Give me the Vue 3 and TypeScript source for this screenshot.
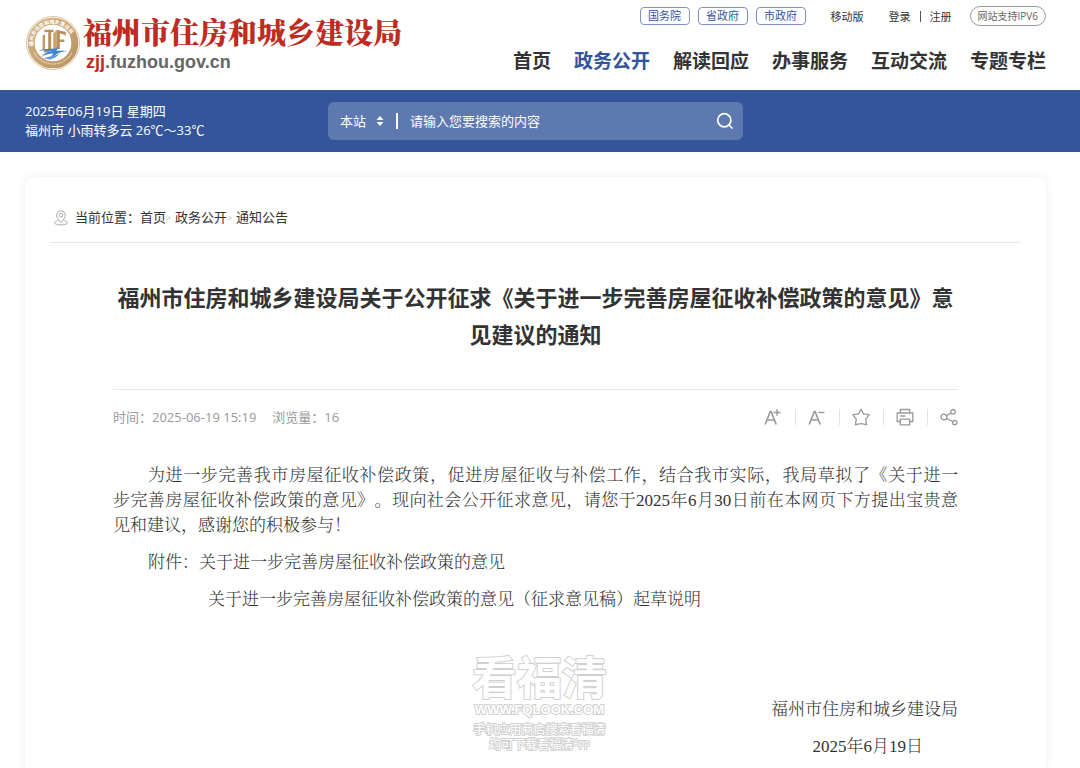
<script setup lang="ts">
import { ref } from 'vue'

const councils: string[] = ['国务院', '省政府', '市政府']
const nav: string[] = ['首页', '政务公开', '解读回应', '办事服务', '互动交流', '专题专栏']
const active = ref('政务公开')
const scope = ref('本站')
const keyword = ref('')
const fontSize = ref(17)
</script>

<template>
  <div class="page">
    <header class="header">
      <a class="brand" href="#">
        <svg class="emblem" viewBox="0 0 56 56" aria-hidden="true">
          <defs>
            <path id="ringTop" d="M8.500 33 A20 20 0 1 1 47.500 33" />
            <linearGradient id="gold" x1="0" y1="0" x2="1" y2="1">
              <stop offset="0" stop-color="#d6b486" />
              <stop offset="1" stop-color="#b8935f" />
            </linearGradient>
          </defs>
          <circle cx="28" cy="28" r="26.500" fill="#fff" stroke="#d9c3a2" stroke-width="1" />
          <circle cx="28" cy="28" r="21.800" fill="none" stroke="url(#gold)" stroke-width="7" />
          <text class="ring-text"><textPath href="#ringTop" startOffset="2">福州市住房和城乡建设局</textPath></text>
          <path d="M9 37.500A21.500 21.500 0 0 0 47 37.500" fill="none" stroke="#ead9bd" stroke-width="1.500" stroke-dasharray="1 .8" />
          <path d="M19.500 14.800h9v2.200h-2.300v17c0 2.600-2.400 3.600-7.200 3.600v-2.600c3 0 4.200-.4 4.200-1.600V17h-3.700z" fill="#b98f5a" />
          <path d="M17.600 20h2.400v14h-2.400z" fill="#c29a66" />
          <path d="M28.200 18.400l3.600-3.600v20.400h-3.600z" fill="#c9a471" />
          <path d="M31.800 14.800l9 2.200v4l-1.600-1.600-4.400-1v6h4.600v2.600h-4.600V34h-3z" fill="#b98f5a" />
          <path d="M14 35.500c6-2.400 11-1.200 16-2l4-2.400-2.600 4.600c5 0 8 0 12 .4-6 .4-8.400 1.400-12.400 3.400l-6.600 4.600 4-5.600c-5 .2-8.600 1.200-12 3.600 2.400-3.600 6-5 10.600-6-4.600-.6-9-.6-13-.6z" fill="#3f87d3" />
          <path d="M19 43.500c5-2.400 10-2.200 16-5-3.600 3.400-5.600 5-10 6z" fill="#5d9ade" />
        </svg>
        <span class="brand-text">
          <strong class="brand-name">福州市住房和城乡建设局</strong>
          <span class="brand-url"><b>zjj</b>.fuzhou.gov.cn</span>
        </span>
      </a>
      <div class="header-side">
        <div class="tools">
          <div class="councils">
            <a v-for="c in councils" :key="c" href="#" class="council">{{ c }}</a>
          </div>
          <a href="#" class="mobile">移动版</a>
          <div class="account"><a href="#">登录</a><i></i><a href="#">注册</a></div>
          <a href="#" class="ipv6">网站支持IPV6</a>
        </div>
        <nav class="nav">
          <a v-for="n in nav" :key="n" href="#" :class="{ active: n === active }" @click.prevent="active = n">{{ n }}</a>
        </nav>
      </div>
    </header>

    <div class="band">
      <div class="weather">
        <div>2025年06月19日 星期四</div>
        <div>福州市 小雨转多云 26℃～33℃</div>
      </div>
      <form class="search" @submit.prevent>
        <label class="scope">
          <select v-model="scope" aria-label="搜索范围">
            <option>本站</option>
          </select>
          <svg viewBox="0 0 8 10" aria-hidden="true"><path d="M4 0l3.500 4h-7zM4 10L.5 6h7z" fill="#fff" /></svg>
        </label>
        <input v-model="keyword" type="text" aria-label="搜索" placeholder="请输入您要搜索的内容" />
        <button type="submit" aria-label="搜索">
          <svg viewBox="0 0 18 18" fill="none" stroke="#fff" stroke-width="1.700" stroke-linecap="round"><circle cx="8.300" cy="8.300" r="6.600" /><path d="M13 13l3 3" /></svg>
        </button>
      </form>
    </div>

    <main class="card">
      <div class="crumbs">
        <svg viewBox="0 0 14 16" fill="none" stroke="#a5a5a5" stroke-width="1"><path d="M7 12.500C4.300 9.600 2.700 7.500 2.700 5.200a4.300 4.300 0 0 1 8.600 0c0 2.300-1.600 4.400-4.300 7.300z" /><circle cx="7" cy="5.200" r="1.800" /><path d="M3.600 10.500C1.800 10.900.6 11.700.6 12.700c0 1.300 2.700 2.200 6.400 2.200s6.400-.9 6.400-2.200c0-1-1.200-1.800-3-2.200" /></svg>
        <span>当前位置：</span><a href="#">首页</a><i>&gt;</i><a href="#">政务公开</a><i>&gt;</i><a href="#">通知公告</a>
      </div>

      <article class="article">
        <h1>福州市住房和城乡建设局关于公开征求《关于进一步完善房屋征收补偿政策的意见》意见建议的通知</h1>
        <div class="meta">
          <div class="info"><span>时间：2025-06-19 15:19</span><span>浏览量：16</span></div>
          <div class="actions">
            <button type="button" aria-label="放大字体" @click="fontSize++">
              <svg viewBox="0 0 18 18"><path d="M1.200 16.500L6.300 3.500h.8l5.100 13M3.200 12h7" stroke-width="1.700" /><path d="M9.500 4.500h7M13 1.200v6.600" stroke-width="1.400" /></svg>
            </button>
            <button type="button" aria-label="缩小字体" @click="fontSize--">
              <svg viewBox="0 0 18 18"><path d="M1.200 16.500L6.300 3.500h.8l5.100 13M3.200 12h7" stroke-width="1.700" /><path d="M10.200 4.500h6.300" stroke-width="1.400" /></svg>
            </button>
            <button type="button" aria-label="收藏">
              <svg viewBox="0 0 18 18"><path d="M9 1.200l2.500 4.700 5.700 1-3.500 4.200.9 5.600c-1.900 0-3.700-1-5.600-1s-3.700 1-5.600 1l.9-5.600L.8 6.900l5.700-1z" stroke-linejoin="round" /></svg>
            </button>
            <button type="button" aria-label="打印">
              <svg viewBox="0 0 18 18"><path d="M4.300 5V1.500h9.400V5M4.300 13.500H1.200V5h15.600v8.500h-3.100M4.300 11.200h9.400v5.600H4.300zM4.300 8h5" /></svg>
            </button>
            <button type="button" aria-label="分享">
              <svg viewBox="0 0 18 18"><circle cx="3.900" cy="9" r="2.900" /><circle cx="13" cy="3.800" r="2.300" /><circle cx="14.700" cy="14.500" r="2.200" /><path d="M6.500 7.600L11 5M6.500 10.300l6.100 3.200" /></svg>
            </button>
          </div>
        </div>

        <div class="body" :style="{ fontSize: fontSize + 'px' }">
          <p>为进一步完善我市房屋征收补偿政策，促进房屋征收与补偿工作，结合我市实际，我局草拟了《关于进一<span class="keep">步完善房屋</span>征收补偿政策的意见》。现向社会公开征求意见，请您于2025年6月30日前在本网页下方提出宝贵意<span class="keep">见和建议</span>，感谢您的积极参与！</p>
          <p>附件：<a href="#">关于进一步完善房屋征收补偿政策的意见</a></p>
          <p class="attach"><a href="#">关于进一步完善房屋征收补偿政策的意见（征求意见稿）起草说明</a></p>
          <div class="sign">
            <p>福州市住房和城乡建设局</p>
            <p class="sign-date">2025年6月19日</p>
          </div>
        </div>
      </article>

      <div class="watermark">
        <div class="wm-name">看福清</div>
        <div class="wm-url">WWW.FQLOOK.COM</div>
        <div class="wm-note">手机应用商店搜索看福清</div>
        <div class="wm-note">均可下载看福清<sup>App</sup></div>
      </div>
    </main>
  </div>
</template>

<style>
body {
  margin: 0;
  background: #fff;
}
</style>

<style scoped>
.page {
  box-sizing: border-box;
  min-height: 100vh;
  display: flex;
  flex-direction: column;
  overflow: hidden;
  color: #333;
  font: 13px/19px "Open Sans", "Noto Sans CJK SC", sans-serif;
  text-spacing-trim: space-all;
}
a {
  color: inherit;
  text-decoration: none;
}
button {
  padding: 0;
  border: 0;
  background: none;
  cursor: pointer;
}
.header {
  display: flex;
  justify-content: space-between;
  height: 90px;
  padding: 0 34px 0 25px;
}
.brand {
  display: flex;
  align-items: flex-start;
  gap: 2px;
  padding-top: 15px;
}
.emblem {
  width: 56px;
  height: 56px;
}
.ring-text {
  font-size: 5px;
  font-weight: 700;
  fill: #fff;
}
.brand-text {
  display: flex;
  flex-direction: column;
  gap: 3px;
  white-space: nowrap;
}
.brand-name {
  color: #bd2c22;
  font: 900 29px/34px "Noto Serif CJK SC", "Noto Sans CJK SC", serif;
}
.brand-url {
  padding-left: 3px;
  color: #666;
  font: 700 18px/20px "Liberation Sans", sans-serif;
}
.brand-url b {
  color: #bd2c22;
}
.header-side {
  display: flex;
  flex-direction: column;
  align-items: flex-end;
  padding-top: 6px;
  white-space: nowrap;
}
.tools {
  display: flex;
  align-items: center;
  height: 20px;
  font-size: 11px;
}
.councils {
  display: flex;
  gap: 8px;
}
.council {
  box-sizing: border-box;
  width: 50px;
  height: 18px;
  border: 1px solid #7f94c4;
  border-radius: 4px;
  color: #34559b;
  line-height: 16px;
  text-align: center;
}
.mobile {
  margin: 0 25px;
}
.account {
  display: flex;
  align-items: center;
  gap: 9px;
}
.account i {
  width: 1px;
  height: 11px;
  background: #555;
}
.ipv6 {
  margin-left: 18px;
  padding: 0 7px;
  border: 1px solid #999;
  border-radius: 10px;
  color: #666;
  font-size: 10px;
  line-height: 18px;
}
.nav {
  display: flex;
  gap: 23px;
  padding-top: 21px;
  font-size: 19px;
  font-weight: 700;
  line-height: 28px;
}
.nav .active {
  color: #34559b;
}
.band {
  display: grid;
  grid-template-columns: 303px minmax(200px, 415px);
  align-items: center;
  height: 62px;
  padding: 0 25px;
  background: #34559b;
  color: #fff;
}
.search {
  display: flex;
  align-items: center;
  height: 38px;
  border-radius: 6px;
  background: #5e79b0;
}
.scope {
  display: flex;
  align-items: center;
  height: 16px;
  margin-left: 12px;
  padding-right: 12px;
  border-right: 2px solid #fff;
}
.scope select {
  appearance: none;
  width: 36px;
  padding: 0;
  border: 0;
  background: none;
  color: #fff;
  font: inherit;
}
.scope svg {
  width: 8px;
  height: 10px;
}
.search input {
  flex: 1;
  min-width: 0;
  padding: 0 12px;
  border: 0;
  outline: 0;
  background: none;
  color: #fff;
  font: inherit;
}
.search input::placeholder {
  color: #fff;
  opacity: 1;
}
.search button {
  margin-right: 9px;
}
button svg {
  display: block;
  width: 18px;
  height: 18px;
}
.card {
  position: relative;
  flex: 1;
  margin: 25px 34px 0 25px;
  padding: 0 25px;
  border-radius: 10px 10px 0 0;
  box-shadow: 0 0 10px rgba(0, 0, 0, 0.08);
}
.crumbs {
  display: flex;
  align-items: center;
  box-sizing: border-box;
  height: 66px;
  padding: 16px 0 0 4px;
  border-bottom: 1px solid #e8e8e8;
}
.crumbs svg {
  width: 14px;
  height: 16px;
  margin-right: 7px;
}
.crumbs i {
  width: 9px;
  color: #bbb;
  font-size: 9px;
  font-style: normal;
}
.article {
  padding: 0 63px;
}
h1 {
  margin: 0;
  padding: 36px 0;
  font-size: 22px;
  font-weight: 700;
  line-height: 37px;
  text-align: center;
}
.meta {
  display: flex;
  align-items: center;
  justify-content: space-between;
  height: 54px;
  border-top: 1px solid #e8e8e8;
  color: #999;
}
.info {
  display: flex;
  gap: 16px;
}
.actions {
  display: flex;
}
.actions button + button {
  margin-left: 13px;
  padding-left: 13px;
  background: linear-gradient(#e2e2e2, #e2e2e2) no-repeat left center / 1px 16px;
}
.actions svg {
  fill: none;
  stroke: #999;
  stroke-width: 1.3;
}
.body {
  padding-top: 19px;
  font-family: "Liberation Serif", "Noto Serif CJK SC", "Noto Sans CJK SC", serif;
  font-weight: 300;
  line-height: 25px;
}
.body p {
  margin: 0 0 12px;
  text-indent: 35px;
  text-align: justify;
}
.body .keep {
  white-space: nowrap;
}
.body .attach {
  padding-left: 60px;
}
.sign {
  padding-top: 73px;
}
.body .sign p {
  text-align: right;
  text-indent: 0;
}
.body .sign .sign-date {
  margin: 0;
  padding-right: 35px;
}
.watermark {
  position: absolute;
  top: 474px;
  left: 50%;
  width: 150px;
  margin-left: -71px;
  color: #fff;
  font-family: "Noto Sans CJK SC", sans-serif;
  text-align: center;
  white-space: nowrap;
  -webkit-text-stroke: 2px #d0d0d0;
  paint-order: stroke fill;
  pointer-events: none;
}
.wm-name {
  font-size: 45px;
  font-weight: 700;
  line-height: 50px;
}
.wm-url {
  font: 700 13px/18px "Liberation Sans", sans-serif;
}
.wm-note {
  font-size: 12px;
  line-height: 15px;
}
.wm-note:nth-child(3) {
  padding-top: 2px;
}
.wm-note sup {
  font-size: 9px;
  line-height: 1px;
  vertical-align: 3px;
}
</style>
